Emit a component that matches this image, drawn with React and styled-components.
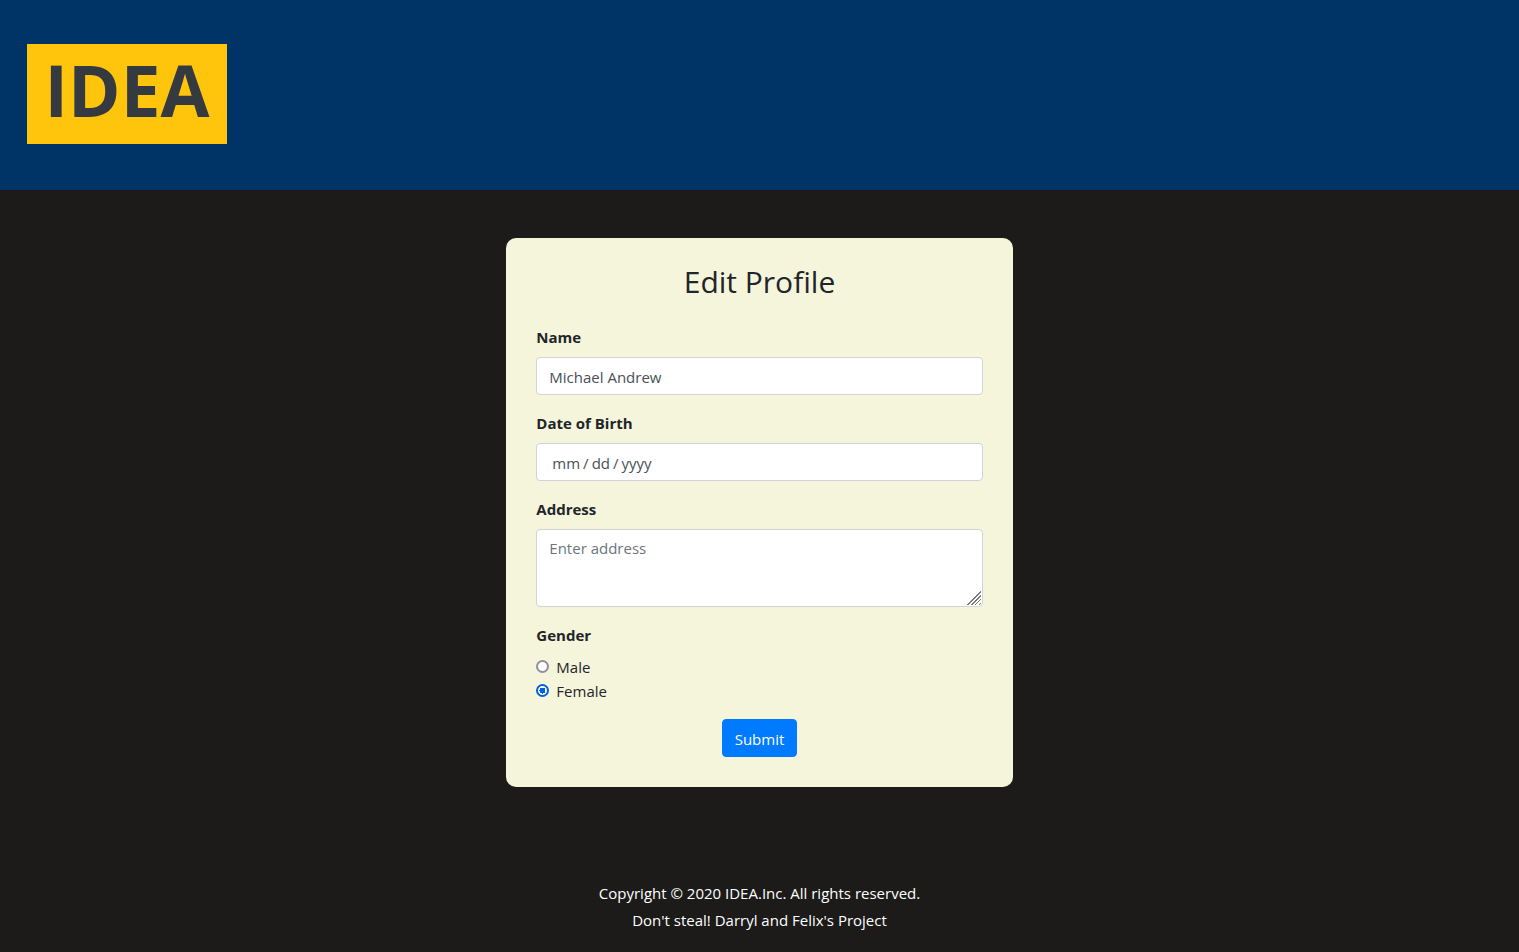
import React from "react";
import styled, { createGlobalStyle, css } from "styled-components";

const GlobalStyle = createGlobalStyle`
  *, *::before, *::after { box-sizing: border-box; }
  body {
    margin: 0;
    background: #1c1b19;
    color: #212529;
    font-family: "Segoe UI", "Open Sans", "Noto Sans", sans-serif;
    font-size: 15px;
    line-height: 24px;
  }
`;

const Page = styled.div`
  display: flex;
  flex-direction: column;
  min-height: 100vh;
`;

const Header = styled.header`
  padding: 44px 27px 46px;
  background: #003366;
`;

const Logo = styled.a`
  display: flex;
  justify-content: center;
  width: 200px;
  height: 100px;
  background: #ffc40c;
  color: #343a40;
  font-size: 71px;
  font-weight: 700;
  line-height: 92px;
  text-decoration: none;
`;

const Main = styled.main`
  display: flex;
  flex: 1;
  justify-content: center;
  align-items: flex-start;
  padding: 48px 0;
`;

const Card = styled.form`
  display: flex;
  flex-direction: column;
  gap: 16px;
  width: calc(100% / 3);
  min-width: 320px;
  padding: 25px 30px 30px;
  border-radius: 10px;
  background: #f5f5dc;
`;

const Title = styled.h1`
  margin: 0 0 8px;
  font-size: 30px;
  font-weight: 400;
  line-height: 38px;
  text-align: center;
`;

const Field = styled.div`
  display: flex;
  flex-direction: column;
  gap: 8px;
`;

const labelStyle = css`
  font-weight: 700;
`;

const Label = styled.label`
  ${labelStyle}
`;

const control = css`
  display: block;
  width: 100%;
  margin: 0;
  padding: 6px 12px;
  border: 1px solid #ced4da;
  border-radius: 4px;
  background: #fff;
  color: #495057;
  font: inherit;
`;

const TextInput = styled.input`
  ${control}
  height: 38px;
  padding: 7px 12px 5px;
`;

const DateInput = styled(TextInput)`
  padding-left: 14px;

  &::-webkit-calendar-picker-indicator { display: none; }
  &::-webkit-datetime-edit-text { padding: 0 2px; }
`;

const TextArea = styled.textarea`
  ${control}
  height: 78px;
  resize: vertical;

  &::placeholder { color: #6c757d; }

  &::-webkit-resizer {
    background: linear-gradient(
        135deg,
        transparent 50%, #777 50% 54%,
        transparent 54% 64%, #777 64% 68%,
        transparent 68% 78%, #777 78% 82%,
        transparent 82% 92%, #777 92% 96%,
        transparent 96%
      ) left top / 14px 14px no-repeat;
  }
`;

const Choices = styled.fieldset`
  margin: 0;
  padding: 0;
  border: 0;
`;

const Legend = styled.legend`
  ${labelStyle}
  margin-bottom: 8px;
  padding: 0;
`;

const Choice = styled.label`
  display: flex;
  align-items: flex-start;
  gap: 7px;
`;

const Radio = styled.input`
  appearance: none;
  width: 13px;
  height: 13px;
  margin: 5px 0 0;
  border: 2px solid #8f8f9d;
  border-radius: 50%;
  background: #fff;

  &:checked {
    border-color: #0060df;
    background: radial-gradient(circle, #0060df 3px, #fff 3px);
  }
`;

const SubmitButton = styled.button`
  align-self: center;
  height: 38px;
  padding: 7px 12px 5px;
  border: 1px solid #007bff;
  border-radius: 4px;
  background: #007bff;
  color: #fff;
  font: inherit;
`;

const Footer = styled.footer`
  padding: 0 16px 18px;
  color: #fff;
  line-height: 27px;
  text-align: center;
`;

const FooterLine = styled.p`
  margin: 0;
`;

export default function App() {
  return (
    <Page>
      <GlobalStyle />
      <Header>
        <Logo href="#">IDEA</Logo>
      </Header>
      <Main>
        <Card onSubmit={(event) => event.preventDefault()}>
          <Title>Edit Profile</Title>
          <Field>
            <Label htmlFor="name">Name</Label>
            <TextInput id="name" type="text" defaultValue="Michael Andrew" />
          </Field>
          <Field>
            <Label htmlFor="birth">Date of Birth</Label>
            <DateInput id="birth" type="date" />
          </Field>
          <Field>
            <Label htmlFor="address">Address</Label>
            <TextArea id="address" placeholder="Enter address" />
          </Field>
          <Choices>
            <Legend>Gender</Legend>
            <Choice>
              <Radio type="radio" name="gender" value="male" />
              Male
            </Choice>
            <Choice>
              <Radio type="radio" name="gender" value="female" defaultChecked />
              Female
            </Choice>
          </Choices>
          <SubmitButton type="submit">Submit</SubmitButton>
        </Card>
      </Main>
      <Footer>
        <FooterLine>Copyright © 2020 IDEA.Inc. All rights reserved.</FooterLine>
        <FooterLine>Don't steal! Darryl and Felix's Project</FooterLine>
      </Footer>
    </Page>
  );
}
